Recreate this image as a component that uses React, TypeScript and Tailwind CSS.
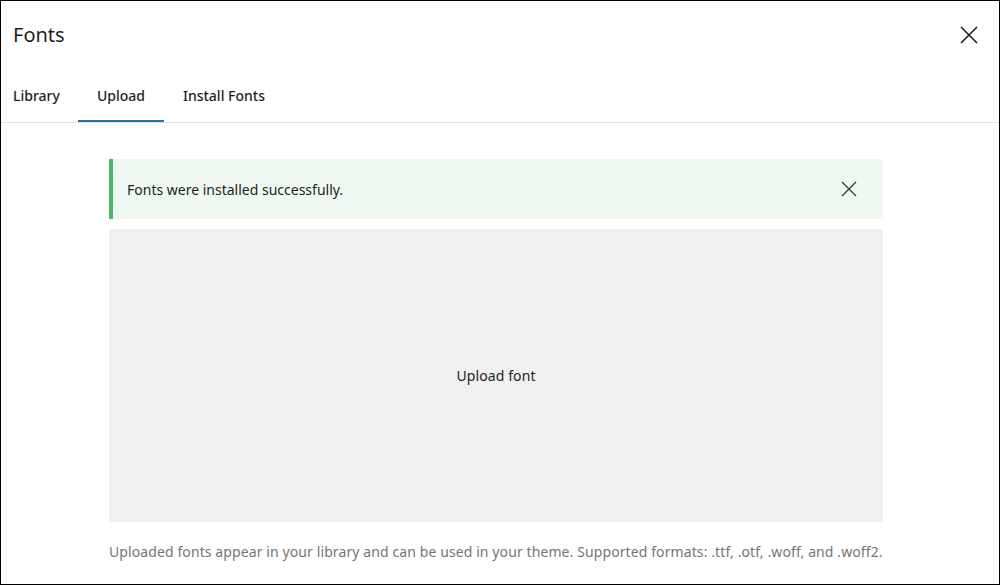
import React from "react";

export default function App() {
  return (
    <div
      className="w-[1000px] h-[585px] bg-white border border-black overflow-hidden flex flex-col text-[#1e1e1e]"
      style={{ fontFamily: '"Noto Sans", "Open Sans", sans-serif' }}
    >
      <div className="flex items-center justify-between h-[70px] pl-[12px] pr-[20px] pb-[2px] shrink-0">
        <h1 className="text-[20px] font-normal leading-none">Fonts</h1>
        <svg width="20" height="20" viewBox="0 0 20 20" fill="none" stroke="#1e1e1e" strokeWidth="1.6">
          <path d="M2 2 L18 18 M18 2 L2 18" />
        </svg>
      </div>
      <div className="flex h-[52px] border-b border-[#e0e0e0] shrink-0">
        <div className="px-[12px] pb-[2px] flex items-center text-[14px] font-medium">Library</div>
        <div className="px-[19px] ml-[6px] flex items-center text-[14px] font-medium border-b-[2px] border-[#2271b1]">Upload</div>
        <div className="px-[19px] pb-[2px] flex items-center text-[14px] font-medium">Install Fonts</div>
      </div>
      <div className="flex flex-col pl-[108px] pr-[116px] pt-[36px] flex-1">
        <div className="flex items-center justify-between h-[60px] bg-[#eff9f1] border-l-[4px] border-[#4ab866] pl-[14px] pr-[26px]">
          <span className="text-[14px] text-[#1e1e1e]">Fonts were installed successfully.</span>
          <svg width="16" height="16" viewBox="0 0 16 16" fill="none" stroke="#3c3c3c" strokeWidth="1.4">
            <path d="M1 1 L15 15 M15 1 L1 15" />
          </svg>
        </div>
        <div className="mt-[10px] h-[293px] bg-[#f0f0f0] rounded-[2px] flex items-center justify-center text-[14px] tracking-[0.1px]">
          Upload font
        </div>
        <p className="mt-[19px] text-[14px] text-[#757575] tracking-[0.1px]">
          Uploaded fonts appear in your library and can be used in your theme. Supported formats: .ttf, .otf, .woff, and .woff2.
        </p>
      </div>
    </div>
  );
}
